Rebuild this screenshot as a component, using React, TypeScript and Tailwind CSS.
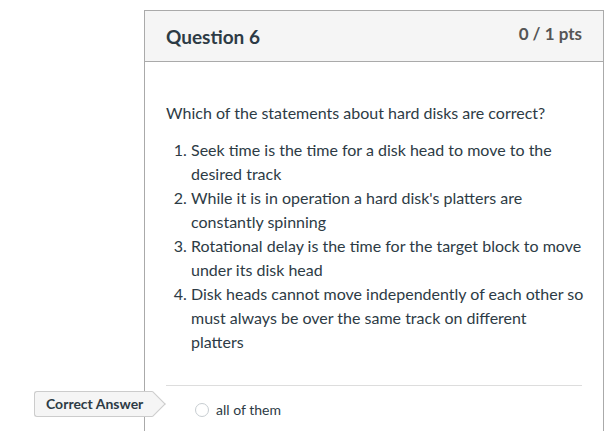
import React from "react";

export default function App() {
  const items: React.ReactNode[] = [
    "Seek time is the time for a disk head to move to the desired track",
    "While it is in operation a hard disk's platters are constantly spinning",
    "Rotational delay is the time for the target block to move under its disk head",
    <>
      Disk heads cannot move independently of each other so must always be over the same track on different
      <br />
      platters
    </>,
  ];
  return (
    <div
      className="w-[606px] h-[431px] overflow-hidden bg-white text-[#2d3b45]"
      style={{ fontFamily: "Lato, 'Liberation Sans', sans-serif" }}
    >
      <div className="mt-[10px] ml-[144px] w-[460px] h-[500px] border border-[#aaaaaa]">
        <div className="h-[51px] bg-[#f5f5f5] border-b border-[#aaaaaa] px-[21px] flex justify-between">
          <div className="text-[19px] font-bold leading-[24px] pt-[14px]">Question 6</div>
          <div className="text-[17px] font-bold leading-[20px] pt-[13px] text-[#555555]">0 / 1 pts</div>
        </div>
        <div className="px-[21px] pt-[39px]">
          <p className="text-[16px] leading-[24px]">Which of the statements about hard disks are correct?</p>
          <ol className="mt-[13px] mr-[-8px] text-[16px] leading-[24px] list-decimal pl-[25px]">
            {items.map((t, i) => (
              <li key={i}>{t}</li>
            ))}
          </ol>
          <div className="mt-[31px] border-t border-[#dddddd]" />
          <div className="relative h-[40px]">
            <div className="absolute left-[-132px] top-[5px] w-[119px] h-[26px] bg-[#f5f5f5] border border-r-0 border-[#cccccc] rounded-l-[3px]">
              <div className="absolute right-[-9px] top-[3px] w-[18px] h-[18px] bg-[#f5f5f5] border-t border-r border-[#cccccc] rotate-45" />
              <div className="relative pl-[11px] text-[14px] font-bold leading-[24px]">Correct Answer</div>
            </div>
            <div className="flex items-center pt-[16px] pl-[29px] gap-[7px]">
              <div className="w-[14px] h-[14px] rounded-full border border-[#c7cdd1] bg-white" />
              <span className="text-[14px] leading-[16px]">all of them</span>
            </div>
          </div>
        </div>
      </div>
    </div>
  );
}
